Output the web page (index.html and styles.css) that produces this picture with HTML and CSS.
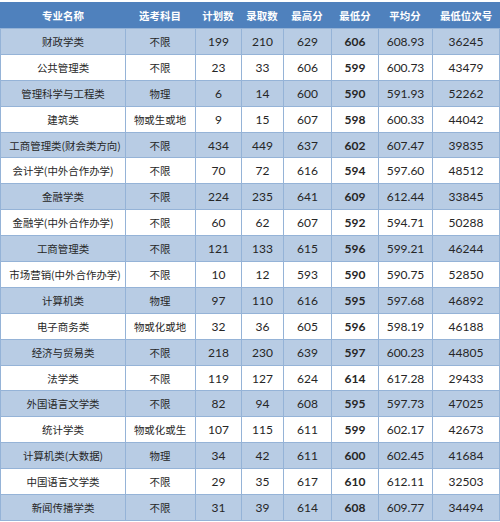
FILE: index.html
```html
<!DOCTYPE html>
<html>
<head>
<meta charset="utf-8">
<link rel="stylesheet" href="styles.css">
</head>
<body>
<table class="scores">
<colgroup>
<col class="c1"><col class="c2"><col class="c3"><col class="c4"><col class="c5"><col class="c6"><col class="c7"><col class="c8">
</colgroup>
<thead>
<tr><th><span class="t">专业名称</span></th><th><span class="t">选考科目</span></th><th><span class="t">计划数</span></th><th><span class="t">录取数</span></th><th><span class="t">最高分</span></th><th><span class="t">最低分</span></th><th><span class="t">平均分</span></th><th><span class="t">最低位次号</span></th></tr>
</thead>
<tbody>
<tr><td><span class="t">财政学类</span></td><td><span class="t">不限</span></td><td>199</td><td>210</td><td>629</td><td class="b">606</td><td>608.93</td><td>36245</td></tr>
<tr><td><span class="t">公共管理类</span></td><td><span class="t">不限</span></td><td>23</td><td>33</td><td>606</td><td class="b">599</td><td>600.73</td><td>43479</td></tr>
<tr><td><span class="t">管理科学与工程类</span></td><td><span class="t">物理</span></td><td>6</td><td>14</td><td>600</td><td class="b">590</td><td>591.93</td><td>52262</td></tr>
<tr><td><span class="t">建筑类</span></td><td><span class="t">物或生或地</span></td><td>9</td><td>15</td><td>607</td><td class="b">598</td><td>600.33</td><td>44042</td></tr>
<tr><td><span class="t">工商管理类(财会类方向)</span></td><td><span class="t">不限</span></td><td>434</td><td>449</td><td>637</td><td class="b">602</td><td>607.47</td><td>39835</td></tr>
<tr><td><span class="t">会计学(中外合作办学)</span></td><td><span class="t">不限</span></td><td>70</td><td>72</td><td>616</td><td class="b">594</td><td>597.60</td><td>48512</td></tr>
<tr><td><span class="t">金融学类</span></td><td><span class="t">不限</span></td><td>224</td><td>235</td><td>641</td><td class="b">609</td><td>612.44</td><td>33845</td></tr>
<tr><td><span class="t">金融学(中外合作办学)</span></td><td><span class="t">不限</span></td><td>60</td><td>62</td><td>607</td><td class="b">592</td><td>594.71</td><td>50288</td></tr>
<tr><td><span class="t">工商管理类</span></td><td><span class="t">不限</span></td><td>121</td><td>133</td><td>615</td><td class="b">596</td><td>599.21</td><td>46244</td></tr>
<tr><td><span class="t">市场营销(中外合作办学)</span></td><td><span class="t">不限</span></td><td>10</td><td>12</td><td>593</td><td class="b">590</td><td>590.75</td><td>52850</td></tr>
<tr><td><span class="t">计算机类</span></td><td><span class="t">物理</span></td><td>97</td><td>110</td><td>616</td><td class="b">595</td><td>597.68</td><td>46892</td></tr>
<tr><td><span class="t">电子商务类</span></td><td><span class="t">物或化或地</span></td><td>32</td><td>36</td><td>605</td><td class="b">596</td><td>598.19</td><td>46188</td></tr>
<tr><td><span class="t">经济与贸易类</span></td><td><span class="t">不限</span></td><td>218</td><td>230</td><td>639</td><td class="b">597</td><td>600.23</td><td>44805</td></tr>
<tr><td><span class="t">法学类</span></td><td><span class="t">不限</span></td><td>119</td><td>127</td><td>624</td><td class="b">614</td><td>617.28</td><td>29433</td></tr>
<tr><td><span class="t">外国语言文学类</span></td><td><span class="t">不限</span></td><td>82</td><td>94</td><td>608</td><td class="b">595</td><td>597.73</td><td>47025</td></tr>
<tr><td><span class="t">统计学类</span></td><td><span class="t">物或化或生</span></td><td>107</td><td>115</td><td>611</td><td class="b">599</td><td>602.17</td><td>42673</td></tr>
<tr><td><span class="t">计算机类(大数据)</span></td><td><span class="t">物理</span></td><td>34</td><td>42</td><td>611</td><td class="b">600</td><td>602.45</td><td>41684</td></tr>
<tr><td><span class="t">中国语言文学类</span></td><td><span class="t">不限</span></td><td>29</td><td>35</td><td>617</td><td class="b">610</td><td>612.11</td><td>32503</td></tr>
<tr><td><span class="t">新闻传播学类</span></td><td><span class="t">不限</span></td><td>31</td><td>39</td><td>614</td><td class="b">608</td><td>609.77</td><td>34494</td></tr>
</tbody>
</table>
</body>
</html>
```
FILE: styles.css
```css
html, body {
  margin: 0;
  padding: 0;
  background: #ffffff;
}
body {
  padding: 2px 0 0 0;
  font-family: "Noto Sans CJK SC", "Noto Sans", sans-serif;
}
.scores {
  border-collapse: collapse;
  table-layout: fixed;
  width: 499px;
  border: 1px solid #4f81bd;
}
.c1 { width: 125px; }
.c2 { width: 70px; }
.c3 { width: 46px; }
.c4 { width: 42px; }
.c5 { width: 48px; }
.c6 { width: 47px; }
.c7 { width: 54px; }
.c8 { width: 67px; }
.t {
  display: inline-block;
  transform: scale(0.87);
  transform-origin: center center;
  white-space: nowrap;
}
.scores th {
  background: #4f81bd;
  color: #ffffff;
  font-weight: bold;
  font-size: 12px;
  height: 25px;
  padding: 0;
  text-align: center;
  border: none;
  white-space: nowrap;
  overflow: visible;
}
.scores td {
  height: 24.9px;
  padding: 0;
  text-align: center;
  color: #262626;
  border: 1px solid #95b3d7;
  white-space: nowrap;
  font-family: "Lato", "Noto Sans CJK SC", sans-serif;
  font-size: 12px;
  overflow: visible;
}
.scores td:first-child,
.scores td:nth-child(2) {
  font-family: "Noto Sans CJK SC", sans-serif;
  font-size: 12px;
}
.scores tbody tr:nth-child(odd) td {
  background: #b8cce4;
}
.scores tbody tr:nth-child(even) td {
  background: #ffffff;
}
.scores td.b {
  font-weight: bold;
}
```
